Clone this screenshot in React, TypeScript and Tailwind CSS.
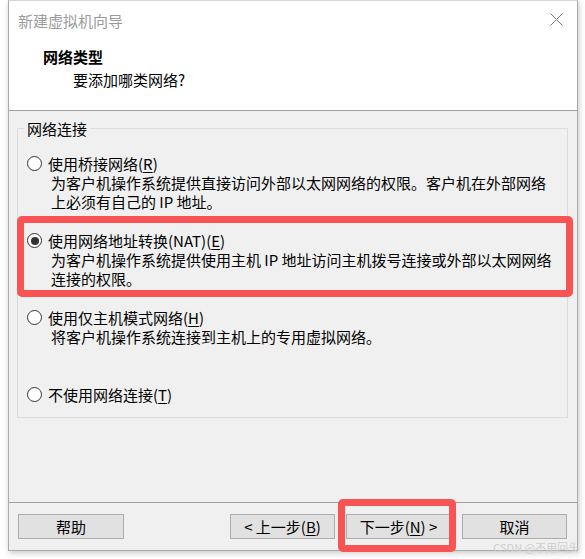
import React from "react";

const FONT = "font-['Noto_Sans_CJK_SC','Noto_Sans',sans-serif]";

// Mnemonic key with underline, e.g. (R)
const Key = ({ k }: { k: string }) => (
  <span>
    (<span className="underline underline-offset-2">{k}</span>)
  </span>
);

const Radio = ({ checked }: { checked?: boolean }) => (
  <span className="w-[15px] h-[15px] rounded-full border border-[#333333] bg-white flex items-center justify-center shrink-0">
    {checked && <span className="w-[8px] h-[8px] rounded-full bg-[#333333]" />}
  </span>
);

const Option: React.FC<{
  checked?: boolean;
  label: React.ReactNode;
  lines?: string[];
  last?: boolean;
}> = ({ checked, label, lines = [], last }) => (
  <div className="flex flex-col">
    <div className="flex items-center h-[19px] gap-[6px]">
      <Radio checked={checked} />
      <span>{label}</span>
    </div>
    {!last && (
      <div className="pl-[24px] min-h-[38px]">
        {lines.map((l, i) => (
          <div key={i} className="h-[19px] whitespace-nowrap">
            {l}
          </div>
        ))}
      </div>
    )}
  </div>
);

const Button: React.FC<{ children: React.ReactNode; className?: string }> = ({
  children,
  className = "",
}) => (
  <div
    className={
      "w-[105px] h-[25px] bg-[#e1e1e1] border border-[#adadad] flex items-center justify-center text-black whitespace-pre " +
      className
    }
  >
    {children}
  </div>
);

export default function App() {
  return (
    <div
      className={
        "w-[585px] h-[559px] bg-white relative overflow-hidden text-[15px] leading-[19px] text-black " +
        FONT
      }
    >
      {/* Dialog window */}
      <div className="ml-[8px] w-[570px] h-[551px] border border-[#aaaaaa] border-t-[#d4d4d4] flex flex-col shadow-[1px_2px_6px_rgba(0,0,0,0.22)]">
        {/* Title bar */}
        <div className="h-[39px] bg-white flex items-center justify-between pl-[9px] pr-[14px] shrink-0">
          <span className="text-[#9b9b9b] -mt-[1px]">新建虚拟机向导</span>
          <svg width="13" height="13" viewBox="0 0 13 13" className="mt-[-2px]">
            <path d="M0.5 0.5 L12.5 12.5 M12.5 0.5 L0.5 12.5" stroke="#7a7a7a" strokeWidth="1" fill="none" />
          </svg>
        </div>

        {/* Header */}
        <div className="h-[71px] bg-white border-b border-[#a0a0a0] pl-[34px] pt-[7px] shrink-0">
          <div className="font-bold">网络类型</div>
          <div className="pl-[30px] mt-[4px]">要添加哪类网络?</div>
        </div>

        {/* Body */}
        <div className="flex-1 bg-[#f0f0f0] flex flex-col">
          <fieldset className="ml-[8px] w-[551px] mt-[8px] border border-[#dcdcdc] pl-[9px] pt-[16px] pb-[13px]">
            <legend className="px-[3px] -ml-[3px]">网络连接</legend>
            <div className="flex flex-col gap-[20px]">
              <Option
                label={
                  <>
                    使用桥接网络<Key k="R" />
                  </>
                }
                lines={[
                  "为客户机操作系统提供直接访问外部以太网网络的权限。客户机在外部网络",
                  "上必须有自己的 IP 地址。",
                ]}
              />
              <Option
                checked
                label={
                  <>
                    使用网络地址转换(NAT)<Key k="E" />
                  </>
                }
                lines={[
                  "为客户机操作系统提供使用主机 IP 地址访问主机拨号连接或外部以太网网络",
                  "连接的权限。",
                ]}
              />
              <Option
                label={
                  <>
                    使用仅主机模式网络<Key k="H" />
                  </>
                }
                lines={["将客户机操作系统连接到主机上的专用虚拟网络。"]}
              />
              <Option
                last
                label={
                  <>
                    不使用网络连接<Key k="T" />
                  </>
                }
              />
            </div>
          </fieldset>

          <div className="flex-1" />

          {/* Footer */}
          <div className="h-[48px] border-t border-[#a0a0a0] pt-[11px] flex items-start shrink-0">
            <Button className="ml-[9px] w-[106px]">帮助</Button>
            <div className="ml-auto mr-[10px] flex gap-[11px]">
              <Button>
                {"< 上一步"}
                <Key k="B" />
              </Button>
              <Button>
                下一步<Key k="N" />
                {" >"}
              </Button>
              <Button>取消</Button>
            </div>
          </div>
        </div>
      </div>

      {/* Red annotation boxes */}
      <div className="absolute left-[17px] top-[216px] w-[556px] h-[81px] border-[7px] border-[#f85454] rounded-[5px]" />
      <div className="absolute left-[338px] top-[499px] w-[118px] h-[53px] border-[7px] border-[#f85454] rounded-[5px]" />

      {/* Watermark */}
      <div className="absolute right-[6px] top-[539px] text-[11px] leading-[16px] text-[#cfcfcf]">
        CSDN @不用回头
      </div>
    </div>
  );
}
